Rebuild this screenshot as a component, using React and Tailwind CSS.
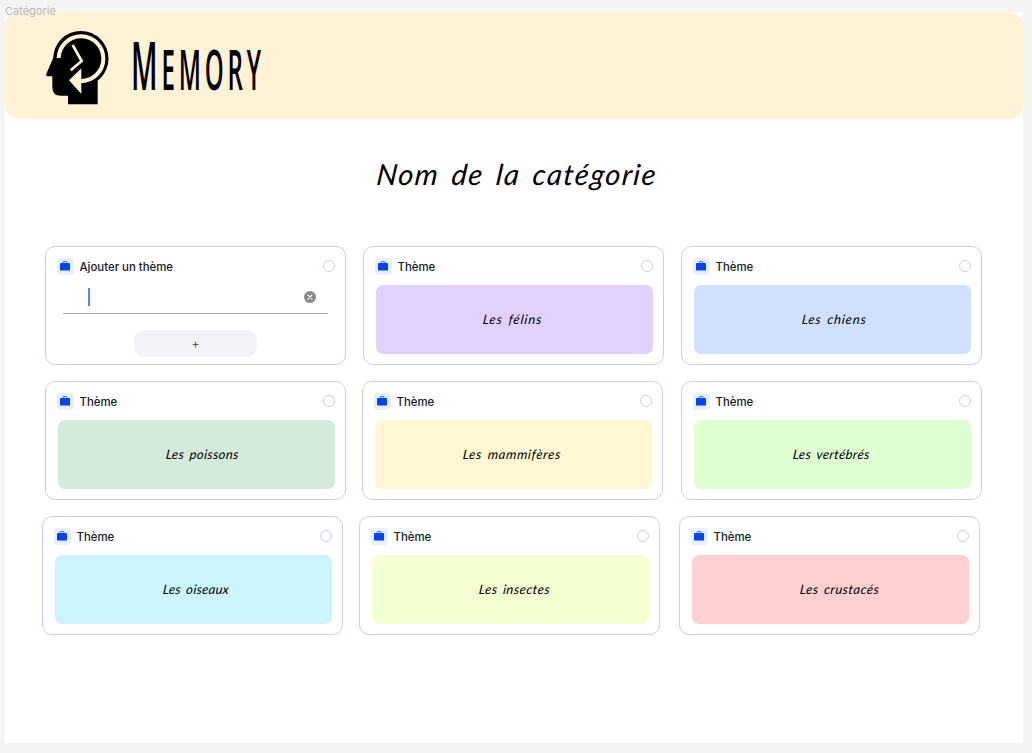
import React from "react";

const rows = [
  {
    layout: "pl-[40px]",
    cards: [
      { add: true, gap: "" },
      { name: "Les félins", color: "bg-[#e2d1ff]", gap: "ml-[17px]", label: "tracking-[0.9px] pr-[3px]" },
      { name: "Les chiens", color: "bg-[#d0e0ff]", gap: "ml-[17px]", label: "tracking-[0.85px] pl-[4px]" },
    ],
  },
  {
    layout: "pl-[40px]",
    cards: [
      { name: "Les poissons", color: "bg-[#d4ebdc]", gap: "", label: "tracking-[0.4px] pl-[11px]" },
      { name: "Les mammifères", color: "bg-[#fff7d1]", gap: "ml-[16px]", label: "tracking-[0.7px] pr-[3px]" },
      { name: "Les vertébrés", color: "bg-[#deffd0]", gap: "ml-[18px]", label: "tracking-[0.4px] pr-[2px]" },
    ],
  },
  {
    layout: "pl-[37px]",
    cards: [
      { name: "Les oiseaux", color: "bg-[#ccf5fb]", gap: "", label: "tracking-[0.3px] pl-[6px]" },
      { name: "Les insectes", color: "bg-[#f3ffd1]", gap: "ml-[16px]", label: "tracking-[0.5px] pl-[9px]" },
      { name: "Les crustacés", color: "bg-[#ffd0d0]", gap: "ml-[19px]", label: "tracking-[0.5px] pl-[18px]" },
    ],
  },
];

function HeadLogo() {
  return (
    <svg className="h-[85px] w-[75px] shrink-0" viewBox="0 0 225 255">
      <circle cx="122.5" cy="101" r="83" fill="#000" />
      <path
        d="M40 98 L19 146 Q17 154 24 154 H37 V185 Q37 212 62 212 H84 V238 H173 V166 L124 100 Z"
        fill="#000"
      />
      <path d="M56 99 A67 67 0 1 1 122 168" fill="none" stroke="#fff2d5" strokeWidth="12" />
      <path d="M87 166 L124 130 V207 Z" fill="#fff2d5" />
      <path d="M98 60 L125 108 L92 136" fill="none" stroke="#fff2d5" strokeWidth="8" />
    </svg>
  );
}

function Briefcase() {
  return (
    <span className="flex size-[17px] shrink-0 items-center justify-center rounded-[4px] bg-[#e6eeff]">
      <svg className="-mt-px -ml-px h-[10px] w-[10px]" viewBox="0 0 10 10">
        <path d="M3.2 2.4V1Q3.2 .5 3.7 .5H6.3Q6.8 .5 6.8 1V2.4" fill="none" stroke="#3b6ef5" strokeWidth="1" />
        <rect x="0" y="2" width="10" height="7.6" rx=".9" fill="#0443f2" />
      </svg>
    </span>
  );
}

function CardHeader({ title }) {
  return (
    <div className="flex h-[17px] items-center pl-[11px] pr-[10px]">
      <Briefcase />
      <span className="ml-[5.5px] pt-px font-['Inter',sans-serif] text-[11.4px] leading-[17px] font-medium text-[#14181f]">
        {title}
      </span>
      <span className="-mt-px ml-auto size-[12px] rounded-full border border-[#c8d1ec]" />
    </div>
  );
}

function AddBody() {
  return (
    <div className="flex flex-col pl-[17px]">
      <div className="mt-[9px] flex h-[30px] w-[265px] items-center border-b border-[#a9a9ab] pr-[12px] pl-[25px]">
        <span className="-mt-[4px] h-[18px] w-[1.5px] bg-[#5b83ff]" />
        <svg className="-mt-[4px] ml-auto size-[12px]" viewBox="0 0 12 12">
          <circle cx="6" cy="6" r="6" fill="#88888b" />
          <path d="M3.9 3.9l4.2 4.2M8.1 3.9l-4.2 4.2" stroke="#fff" strokeWidth="1.3" strokeLinecap="round" />
        </svg>
      </div>
      <button className="mt-[16px] ml-[71px] flex h-[27px] w-[123px] items-center justify-center rounded-[10px] bg-[#f2f3f8] font-['Inter',sans-serif] text-[12px] leading-none text-[#4c5064]">
        +
      </button>
    </div>
  );
}

function Card({ card }) {
  return (
    <div className={"h-[119px] w-[301px] shrink-0 rounded-[10px] border border-[#c8d1ec] bg-white pt-[11px] " + card.gap}>
      <CardHeader title={card.add ? "Ajouter un thème" : "Thème"} />
      {card.add ? (
        <AddBody />
      ) : (
        <div className={"mt-[10px] ml-[12px] flex h-[69px] w-[277px] items-center justify-center rounded-[7px] " + card.color}>
          <span className={"-mt-px -skew-x-6 font-['Lato',sans-serif] text-[13px] leading-[18px] whitespace-nowrap text-black italic [word-spacing:2px] " + card.label}>
            {card.name}
          </span>
        </div>
      )}
    </div>
  );
}

export default function App() {
  return (
    <div className="h-[753px] w-[1032px] overflow-hidden bg-[#f4f4f4] pl-[5px]">
      <div className="relative z-10 h-[12px]">
        <span className="block pt-[4px] font-['Inter',sans-serif] text-[11px] leading-[14px] text-[#b9b7b3]">Catégorie</span>
      </div>
      <main className="h-[731px] w-[1018px] bg-white">
        <header className="flex h-[107px] rounded-[14px] bg-[#fff2d5] pt-[13px] pl-[35px]">
          <HeadLogo />
          <h1 className="-mt-[3px] ml-[16px] origin-top-left scale-x-[0.43] font-['Open_Sans',sans-serif] text-[56px] leading-[85px] font-semibold tracking-[9px] whitespace-nowrap text-black">
            <span className="text-[67px]">M</span>EMORY
          </h1>
        </header>
        <h2 className="-skew-x-6 pt-[35px] pl-[10px] text-center font-['Lato',sans-serif] text-[29px] leading-[40px] tracking-[1.5px] text-black italic [word-spacing:4px]">
          Nom de la catégorie
        </h2>
        <div className="mt-[52px] flex flex-col gap-[16px]">
          {rows.map((row, i) => (
            <div key={i} className={"flex " + row.layout}>
              {row.cards.map((card, j) => (
                <Card key={j} card={card} />
              ))}
            </div>
          ))}
        </div>
      </main>
    </div>
  );
}
